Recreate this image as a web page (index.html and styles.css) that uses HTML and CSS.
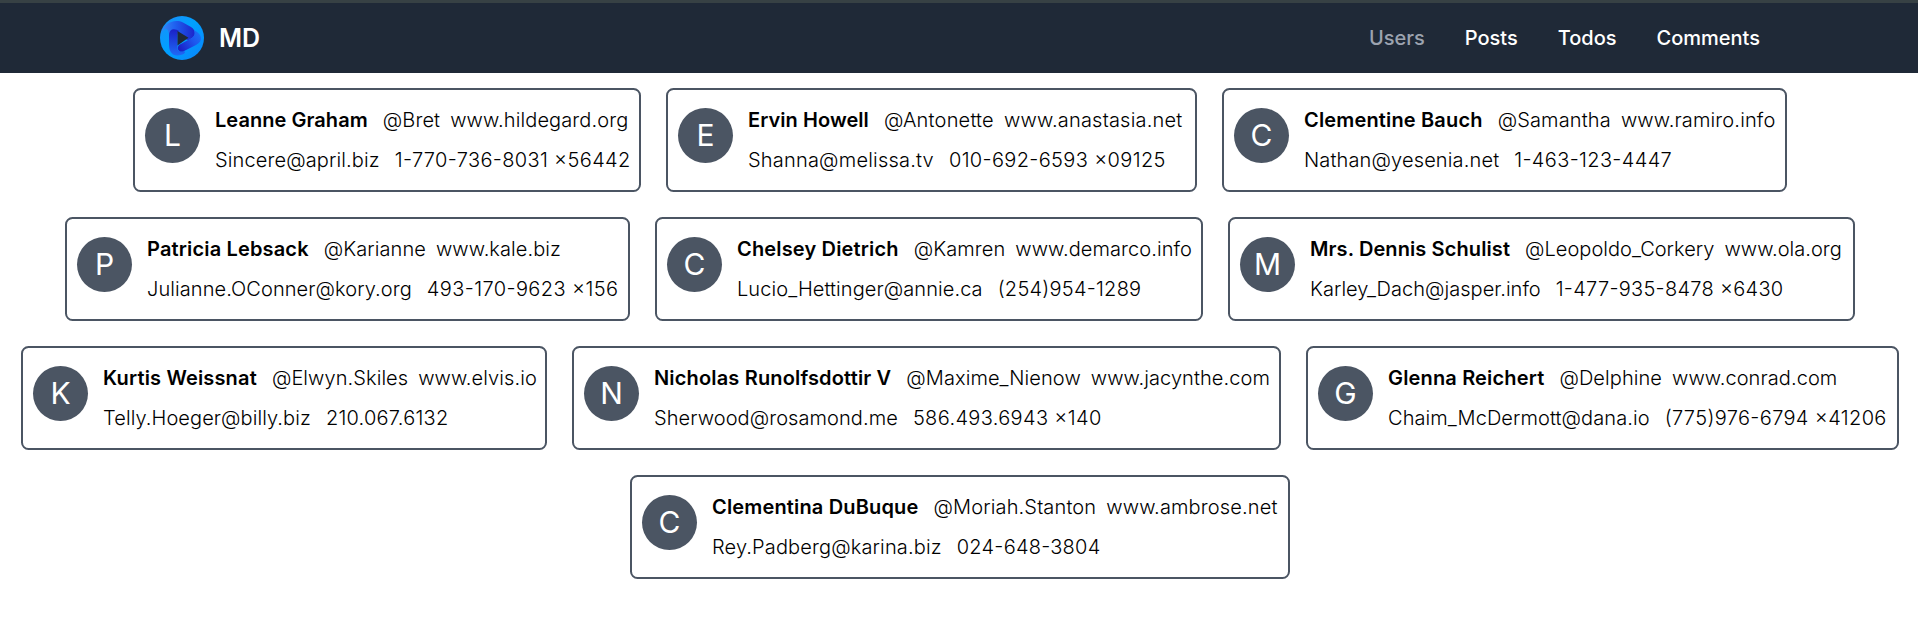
FILE: index.html
```html
<!DOCTYPE html>
<html lang="en">
<head>
<meta charset="utf-8">
<title>MD</title>
<link rel="stylesheet" href="styles.css">
</head>
<body>
<header class="header">
  <div class="container">
    <a class="brand">
      <svg class="logo" viewBox="0 0 44 44">
        <defs>
          <linearGradient id="ring" x1="0" y1="0" x2="1" y2="1"><stop offset="0" stop-color="#1e8bf8"/><stop offset=".45" stop-color="#00a0ff"/><stop offset="1" stop-color="#0a84fa"/></linearGradient>
          <linearGradient id="top" gradientUnits="userSpaceOnUse" x1="4" y1="14" x2="34" y2="14"><stop offset="0" stop-color="#3580f2"/><stop offset=".35" stop-color="#1f62f0"/><stop offset="1" stop-color="#1c26cc"/></linearGradient>
          <linearGradient id="left" gradientUnits="userSpaceOnUse" x1="12" y1="38" x2="14" y2="14"><stop offset="0" stop-color="#1e66f4"/><stop offset="1" stop-color="#1b22c8"/></linearGradient>
          <linearGradient id="lower" gradientUnits="userSpaceOnUse" x1="41" y1="18" x2="20" y2="33"><stop offset="0" stop-color="#1c70f6"/><stop offset=".4" stop-color="#1d56ee"/><stop offset="1" stop-color="#1b20c6"/></linearGradient>
        </defs>
        <circle cx="22" cy="22" r="22" fill="url(#ring)"/>
        <path d="M1 18C3 8 14 2 23 6.500L31 11C36 14 36 20 32 22L28 24.500L17 18L9 18C8 11 3 12 1 18Z" fill="url(#top)"/>
        <path d="M9 20C9 12 15 12 19 15L17.500 16V33C18 36 22 36 24 35C28 38 18 41 13 38.500C10 36 9 33 9 29Z" fill="url(#left)"/>
        <path d="M34 14C36 19 33 21.500 30 23L19 29C16 33 19 37 24 35L36 29C44 25 42 18 34 14Z" fill="url(#lower)"/>
        <path d="M17.500 15L28.500 21.700L17.500 29.500Z" fill="#1f2937"/>
      </svg>
      <span class="brand-name">MD</span>
    </a>
    <nav class="nav"><a class="active">Users</a><a>Posts</a><a>Todos</a><a>Comments</a></nav>
  </div>
</header>
<main class="users">
  <article class="card leanne"><div class="avatar">L</div><div><p class="line"><b>Leanne Graham</b><span class="handle">@Bret</span><span>www.hildegard.org</span></p><p class="line"><span class="mail">Sincere@april.biz</span><span class="phone">1-770-736-8031 x56442</span></p></div></article>
  <article class="card ervin"><div class="avatar">E</div><div><p class="line"><b>Ervin Howell</b><span class="handle">@Antonette</span><span>www.anastasia.net</span></p><p class="line"><span class="mail">Shanna@melissa.tv</span><span class="phone">010-692-6593 x09125</span></p></div></article>
  <article class="card clementine"><div class="avatar">C</div><div><p class="line"><b>Clementine Bauch</b><span class="handle">@Samantha</span><span>www.ramiro.info</span></p><p class="line"><span class="mail">Nathan@yesenia.net</span><span class="phone">1-463-123-4447</span></p></div></article>
  <article class="card patricia"><div class="avatar">P</div><div><p class="line"><b>Patricia Lebsack</b><span class="handle">@Karianne</span><span>www.kale.biz</span></p><p class="line"><span class="mail">Julianne.OConner@kory.org</span><span class="phone">493-170-9623 x156</span></p></div></article>
  <article class="card chelsey"><div class="avatar">C</div><div><p class="line"><b>Chelsey Dietrich</b><span class="handle">@Kamren</span><span>www.demarco.info</span></p><p class="line"><span class="mail">Lucio_Hettinger@annie.ca</span><span class="phone">(254)954-1289</span></p></div></article>
  <article class="card dennis"><div class="avatar">M</div><div><p class="line"><b>Mrs. Dennis Schulist</b><span class="handle">@Leopoldo_Corkery</span><span>www.ola.org</span></p><p class="line"><span class="mail">Karley_Dach@jasper.info</span><span class="phone">1-477-935-8478 x6430</span></p></div></article>
  <article class="card kurtis"><div class="avatar">K</div><div><p class="line"><b>Kurtis Weissnat</b><span class="handle">@Elwyn.Skiles</span><span>www.elvis.io</span></p><p class="line"><span class="mail">Telly.Hoeger@billy.biz</span><span class="phone">210.067.6132</span></p></div></article>
  <article class="card nicholas"><div class="avatar">N</div><div><p class="line"><b>Nicholas Runolfsdottir V</b><span class="handle">@Maxime_Nienow</span><span>www.jacynthe.com</span></p><p class="line"><span class="mail">Sherwood@rosamond.me</span><span class="phone">586.493.6943 x140</span></p></div></article>
  <article class="card glenna"><div class="avatar">G</div><div><p class="line"><b>Glenna Reichert</b><span class="handle">@Delphine</span><span>www.conrad.com</span></p><p class="line"><span class="mail">Chaim_McDermott@dana.io</span><span class="phone">(775)976-6794 x41206</span></p></div></article>
  <article class="card clementina"><div class="avatar">C</div><div><p class="line"><b>Clementina DuBuque</b><span class="handle">@Moriah.Stanton</span><span>www.ambrose.net</span></p><p class="line"><span class="mail">Rey.Padberg@karina.biz</span><span class="phone">024-648-3804</span></p></div></article>
</main>
</body>
</html>
```
FILE: styles.css
```css
* { box-sizing: border-box; margin: 0; padding: 0; }
html { overflow: hidden; }
body { width: 1920px; font: 300 20px/30px Inter, sans-serif; color: #000; background: #fff; }
.header { height: 73px; background: #1f2937; border-top: 3px solid #374144; }
.container { width: 1600px; height: 100%; margin: 0 auto; display: flex; align-items: center; justify-content: space-between; }
.brand { display: flex; align-items: center; gap: 15px; color: #fff; }
.logo { width: 44px; height: 44px; display: block; }
.brand-name { font-size: 25px; font-weight: 600; }
.nav { display: flex; gap: 40px; color: #fff; font-weight: 500; }
.nav .active { color: #9ca3af; }
.users { display: flex; flex-wrap: wrap; justify-content: center; gap: 25px; padding: 15px 0; }
.card { display: flex; height: 104px; padding: 10px; border: 2px solid #4b5563; border-radius: 7.5px; }
.avatar { flex: none; width: 55px; height: 55px; margin: 8px 15px 0 0; border-radius: 50%; background: #4b5563; color: #fff; font-size: 30px; font-weight: 400; line-height: 55px; text-align: center; }
.line { display: flex; height: 40px; padding: 5px 0; white-space: nowrap; letter-spacing: .08px; }
.line b { font-weight: 600; margin-right: 15px; letter-spacing: .16px; }
.handle { margin-right: 10px; }
.mail { margin-right: 15px; }
.phone { letter-spacing: .35px; font-feature-settings: "calt" 1; }

.leanne { width: 508px; }
.ervin { width: 531px; }
.clementine { width: 565px; }
.patricia { width: 565px; }
.chelsey { width: 548px; }
.dennis { width: 627px; }
.kurtis { width: 526px; }
.nicholas { width: 709px; }
.glenna { width: 593px; }
.clementina { width: 660px; }
.leanne .line { letter-spacing: .12px; }
.leanne b { letter-spacing: .05px; }
.ervin .line { letter-spacing: .2px; }
.ervin b { letter-spacing: .06px; }
.clementine .line, .clementina .line { letter-spacing: .14px; }
.dennis b { letter-spacing: .1px; }
.dennis .line { letter-spacing: .03px; }
.patricia .phone { letter-spacing: .4px; }
.chelsey .phone, .clementina .phone { letter-spacing: .24px; }
.dennis .phone { letter-spacing: .28px; }
.kurtis .phone { letter-spacing: .24px; }
```
